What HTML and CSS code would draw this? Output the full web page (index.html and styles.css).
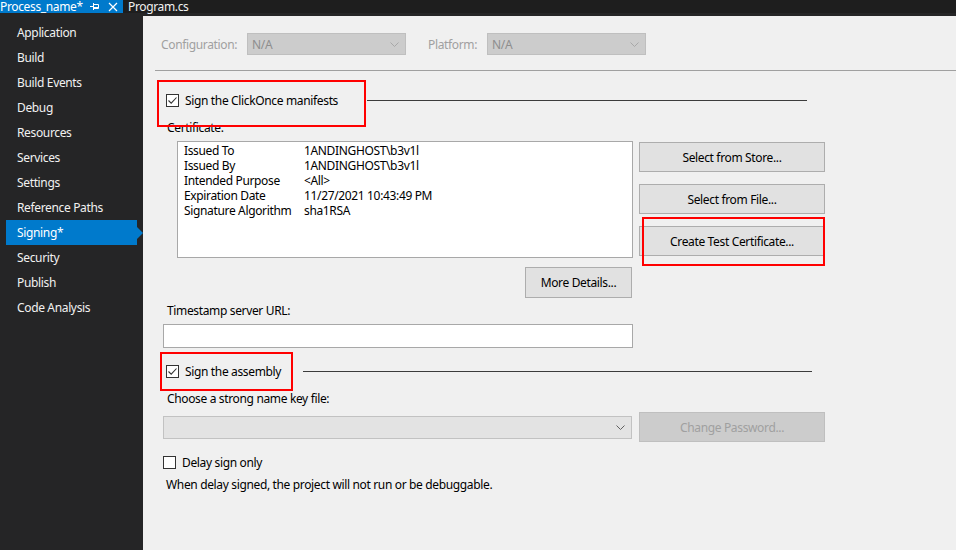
FILE: index.html
```html
<!DOCTYPE html>
<html>
<head>
<meta charset="utf-8">
<link rel="stylesheet" href="styles.css">
</head>
<body>
<div class="tabbar">
  <div class="tab active">
    <span class="tab-title">Process_name*</span>
    <svg class="pin" width="9" height="9" viewBox="0 0 9 9"><path d="M0 4.5H3M3.5 1V8M3.5 2.5H8.5V6.5H3.5M3.5 5.5H8.5" fill="none" stroke="#fff" stroke-width="1"/></svg>
    <svg class="close" width="10" height="10" viewBox="0 0 10 10"><path d="M1 1L9 9M9 1L1 9" stroke="#fff" stroke-width="1.2"/></svg>
  </div>
  <div class="tab">Program.cs</div>
</div>
<div class="main">
  <nav class="sidebar">
    <div class="nav-item">Application</div>
    <div class="nav-item">Build</div>
    <div class="nav-item">Build Events</div>
    <div class="nav-item">Debug</div>
    <div class="nav-item">Resources</div>
    <div class="nav-item">Services</div>
    <div class="nav-item">Settings</div>
    <div class="nav-item">Reference Paths</div>
    <div class="nav-item selected">Signing*</div>
    <div class="nav-item">Security</div>
    <div class="nav-item">Publish</div>
    <div class="nav-item">Code Analysis</div>
  </nav>
  <section class="content">
    <div class="config-row">
      <span class="cfg-label cfg-label-1">Configuration:</span>
      <div class="combo disabled-combo"><span>N/A</span><svg class="chev" width="9" height="5" viewBox="0 0 9 5"><path d="M0.5 0.5L4.5 4.5L8.5 0.5" fill="none" stroke="#a8a8a8"/></svg></div>
      <span class="cfg-label cfg-label-2">Platform:</span>
      <div class="combo disabled-combo"><span>N/A</span><svg class="chev" width="9" height="5" viewBox="0 0 9 5"><path d="M0.5 0.5L4.5 4.5L8.5 0.5" fill="none" stroke="#a8a8a8"/></svg></div>
    </div>
    <div class="sep"></div>

    <div class="group-row group-1">
      <div class="check-label w1">
        <span class="checkbox checked"><svg width="11" height="11" viewBox="0 0 11 11"><path d="M1.5 5.5L4.2 8.2L9.5 2.5" fill="none" stroke="#333" stroke-width="1.1"/></svg></span>
        <span>Sign the ClickOnce manifests</span>
      </div>
      <div class="group-line l1"></div>
    </div>

    <div class="label cert-label">Certificate:</div>
    <div class="cert-area">
      <div class="cert-box">
        <div class="cert-row"><span class="c1">Issued To</span><span>1ANDINGHOST\b3v1l</span></div>
        <div class="cert-row"><span class="c1">Issued By</span><span>1ANDINGHOST\b3v1l</span></div>
        <div class="cert-row"><span class="c1">Intended Purpose</span><span>&lt;All&gt;</span></div>
        <div class="cert-row"><span class="c1">Expiration Date</span><span>11/27/2021 10:43:49 PM</span></div>
        <div class="cert-row"><span class="c1">Signature Algorithm</span><span>sha1RSA</span></div>
      </div>
      <div class="cert-buttons">
        <div class="btn">Select from Store...</div>
        <div class="btn">Select from File...</div>
        <div class="btn">Create Test Certificate...</div>
      </div>
    </div>
    <div class="btn more-btn">More Details...</div>

    <div class="label ts-label">Timestamp server URL:</div>
    <div class="textbox"></div>

    <div class="group-row group-2">
      <div class="check-label w2">
        <span class="checkbox checked"><svg width="11" height="11" viewBox="0 0 11 11"><path d="M1.5 5.5L4.2 8.2L9.5 2.5" fill="none" stroke="#333" stroke-width="1.1"/></svg></span>
        <span>Sign the assembly</span>
      </div>
      <div class="group-line l2"></div>
    </div>

    <div class="label key-label">Choose a strong name key file:</div>
    <div class="key-row">
      <div class="combo key-combo"><span></span><svg class="chev" width="9" height="5" viewBox="0 0 9 5"><path d="M0.5 0.5L4.5 4.5L8.5 0.5" fill="none" stroke="#606060"/></svg></div>
      <div class="btn btn-disabled">Change Password...</div>
    </div>

    <div class="delay-row">
      <span class="checkbox"></span>
      <span>Delay sign only</span>
    </div>
    <div class="label note">When delay signed, the project will not run or be debuggable.</div>

    <div class="redbox rb1"></div>
    <div class="redbox rb2"></div>
    <div class="redbox rb3"></div>
  </section>
</div>
</body>
</html>
```

FILE: styles.css
```css
* { box-sizing: border-box; }
html, body { margin: 0; padding: 0; }
body {
  width: 956px;
  height: 550px;
  overflow: hidden;
  background: #252526;
  font-family: "Noto Sans", "Open Sans", sans-serif;
  font-size: 12px;
  letter-spacing: -0.35px;
  color: #000;
}

.tabbar {
  height: 13px;
  background: #1e1e1e;
  display: flex;
  align-items: stretch;
}
.tab {
  color: #f1f1f1;
  font-size: 12px;
  line-height: 13px;
  padding: 0 5px;
  display: flex;
  align-items: center;
}
.tab.active {
  background: #007acc;
  color: #fff;
  width: 123px;
  padding: 0;
}
.tab-title { flex: 1; white-space: nowrap; }
.pin { margin-right: 9px; flex: none; }
.close { margin-right: 5px; flex: none; }

.main {
  display: grid;
  grid-template-columns: 143px 1fr;
  height: 537px;
}

.sidebar {
  padding-top: 7px;
  background: #252526;
}
.nav-item {
  height: 25px;
  line-height: 26px;
  margin-left: 6px;
  width: 131px;
  padding-left: 11px;
  color: #f1f1f1;
  position: relative;
}
.nav-item.selected {
  background: #007acc;
  color: #fff;
}
.nav-item.selected::after {
  content: "";
  position: absolute;
  right: -6px;
  top: 7px;
  border-top: 6px solid transparent;
  border-bottom: 6px solid transparent;
  border-left: 6px solid #007acc;
}

.content {
  position: relative;
  margin-top: 3px;
  background: #f0f0f0;
  display: flex;
  flex-direction: column;
  align-items: flex-start;
}

.config-row {
  margin-top: 17px;
  height: 22px;
  display: flex;
  align-items: center;
  padding-left: 18px;
}
.cfg-label { color: #a0a0a0; }
.cfg-label-1 { width: 86px; }
.cfg-label-2 { width: 59px; margin-left: 22px; }
.combo {
  height: 22px;
  width: 159px;
  display: flex;
  align-items: center;
  justify-content: space-between;
  padding: 0 6px 0 4px;
}
.disabled-combo {
  background: #cccccc;
  border: 1px solid #bfbfbf;
  color: #8e8e8e;
}

.sep {
  margin-top: 15px;
  margin-left: 12px;
  height: 1px;
  align-self: stretch;
  background: #a0a0a0;
}

.group-row {
  display: flex;
  align-items: center;
  height: 16px;
  padding-left: 23px;
}
.group-1 { margin-top: 21px; }
.check-label { display: flex; align-items: center; }
.w1 { width: 201px; }
.w2 { width: 137px; }
.checkbox {
  width: 13px;
  height: 13px;
  border: 1px solid #333;
  background: #fff;
  margin-right: 6px;
  display: flex;
  align-items: center;
  justify-content: center;
  flex: none;
}
.group-line { height: 1px; background: #3c3c3c; }
.l1 { width: 440px; }
.l2 { width: 509px; }

.label { line-height: 16px; padding-left: 24px; }
.cert-label { margin-top: 12px; }

.cert-area {
  margin-top: 5px;
  margin-left: 34px;
  display: flex;
  gap: 6px;
}
.cert-box {
  width: 456px;
  height: 117px;
  background: #fff;
  border: 1px solid #a8a8a8;
  padding: 1px 0 0 6px;
}
.cert-row { display: flex; line-height: 15px; height: 15px; }
.c1 { width: 120px; }
.cert-buttons {
  margin-top: 1px;
  display: flex;
  flex-direction: column;
  gap: 12px;
}
.btn {
  width: 186px;
  height: 30px;
  background: #e1e1e1;
  border: 1px solid #adadad;
  display: flex;
  align-items: center;
  justify-content: center;
}
.more-btn {
  margin-top: 9px;
  margin-left: 382px;
  width: 107px;
  height: 31px;
}

.ts-label { margin-top: 5px; }
.textbox {
  margin-top: 5px;
  margin-left: 20px;
  width: 470px;
  height: 24px;
  background: #fff;
  border: 1px solid #a8a8a8;
}

.group-2 { margin-top: 15px; }

.key-label { margin-top: 12px; }
.key-row {
  margin-top: 5px;
  margin-left: 20px;
  display: flex;
  align-items: center;
  gap: 7px;
}
.key-combo {
  width: 469px;
  height: 23px;
  background: #e3e3e3;
  border: 1px solid #c2c2c2;
}
.btn-disabled {
  background: #cccccc;
  border-color: #bfbfbf;
  color: #a0a0a0;
}

.delay-row {
  margin-top: 12px;
  padding-left: 20px;
  display: flex;
  align-items: center;
  height: 16px;
}
.note { margin-top: 7px; padding-left: 23px; }

.redbox {
  position: absolute;
  border: 2px solid #ff0000;
}
.rb1 { left: 14px; top: 64px; width: 209px; height: 47px; }
.rb2 { left: 499px; top: 201px; width: 183px; height: 49px; }
.rb3 { left: 17px; top: 336px; width: 133px; height: 39px; }
```
